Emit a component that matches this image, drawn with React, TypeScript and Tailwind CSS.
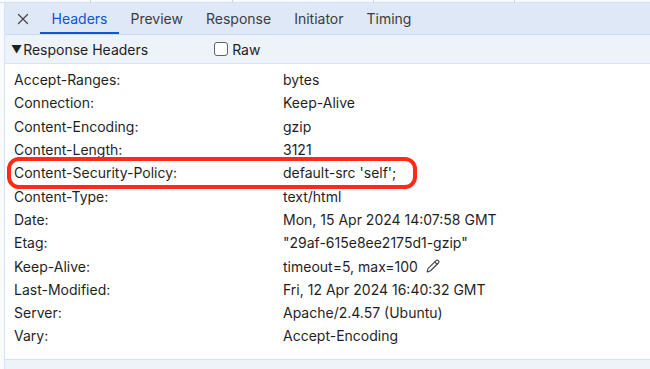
import { X, Pencil } from "lucide-react"

const headers: [string, string][] = [
  ["Accept-Ranges:", "bytes"],
  ["Connection:", "Keep-Alive"],
  ["Content-Encoding:", "gzip"],
  ["Content-Length:", "3121"],
  ["Content-Security-Policy:", "default-src 'self';"],
  ["Content-Type:", "text/html"],
  ["Date:", "Mon, 15 Apr 2024 14:07:58 GMT"],
  ["Etag:", "\"29af-615e8ee2175d1-gzip\""],
  ["Keep-Alive:", "timeout=5, max=100"],
  ["Last-Modified:", "Fri, 12 Apr 2024 16:40:32 GMT"],
  ["Server:", "Apache/2.4.57 (Ubuntu)"],
  ["Vary:", "Accept-Encoding"],
]

const tabs = ["Headers", "Preview", "Response", "Initiator", "Timing"]

export default function App() {
  return (
    <div className="relative w-[650px] h-[369px] overflow-hidden bg-white text-[#1f1f1f] font-['Inter',sans-serif] text-[14px]">
      {/* strip of the request table above */}
      <div className="flex h-[3px] bg-[#f8fafd] border-b border-[#d3e3fd]">
        <div className="w-[91px] border-r border-[#c7d3e6]" />
        <div className="w-[142px] border-r border-[#c7d3e6]" />
        <div className="w-[141px] border-r border-[#c7d3e6]" />
        <div className="w-[141px] border-r border-[#c7d3e6]" />
        <div className="flex-1" />
      </div>

      <div className="flex h-[366px]">
        <div className="w-[5px] border-r border-[#d3e3fd] bg-[#f8fafd]" />
        <div className="flex-1 flex flex-col">
          {/* Tabs */}
          <div className="flex items-end h-[32px] bg-[#dfe8f6] border-b border-[#cbdaf2]">
            <div className="w-[35px] h-full flex items-center justify-center pt-[1px] text-[#474747]">
              <X className="w-[18px] h-[18px]" strokeWidth={1.7} />
            </div>
            {tabs.map((t, i) => (
              <div
                key={t}
                className={`h-full flex items-center pt-[1px] px-[11.5px] border-b-2 ${
                  i === 0 ? "text-[#0b57d0] border-[#0b57d0]" : "text-[#3c3c3c] border-transparent"
                }`}
              >
                {t}
              </div>
            ))}
          </div>

          {/* Section header */}
          <div className="flex items-center h-[29px] bg-[#eef2f9] border-b border-[#d3e3fd]">
            <span className="ml-[6px] text-[11px] leading-none">▼</span>
            <span className="ml-[1px]">Response Headers</span>
            <span className="ml-[66px] w-[14px] h-[14px] rounded-[3px] border border-[#5f6368] bg-white" />
            <span className="ml-[4px]">Raw</span>
          </div>

          {/* Rows */}
          <div className="pt-[4px] flex-1">
            {headers.map(([k, v]) => (
              <div key={k} className="flex items-center h-[23.3px]">
                <span className="w-[278px] pl-[9px]">{k}</span>
                <span className="flex items-center gap-[8px]">
                  {v}
                  {k === "Keep-Alive:" && <Pencil className="w-[14px] h-[14px] text-[#474747]" strokeWidth={2} />}
                </span>
              </div>
            ))}
          </div>

          <div className="h-[10px] bg-[#eef2f9] border-t border-[#d3e3fd]" />
        </div>
      </div>

      {/* annotation */}
      <div className="absolute left-[7px] top-[157px] w-[410px] h-[32px] rounded-[12px] border-[4px] border-[#ff2a17]" />
    </div>
  )
}
